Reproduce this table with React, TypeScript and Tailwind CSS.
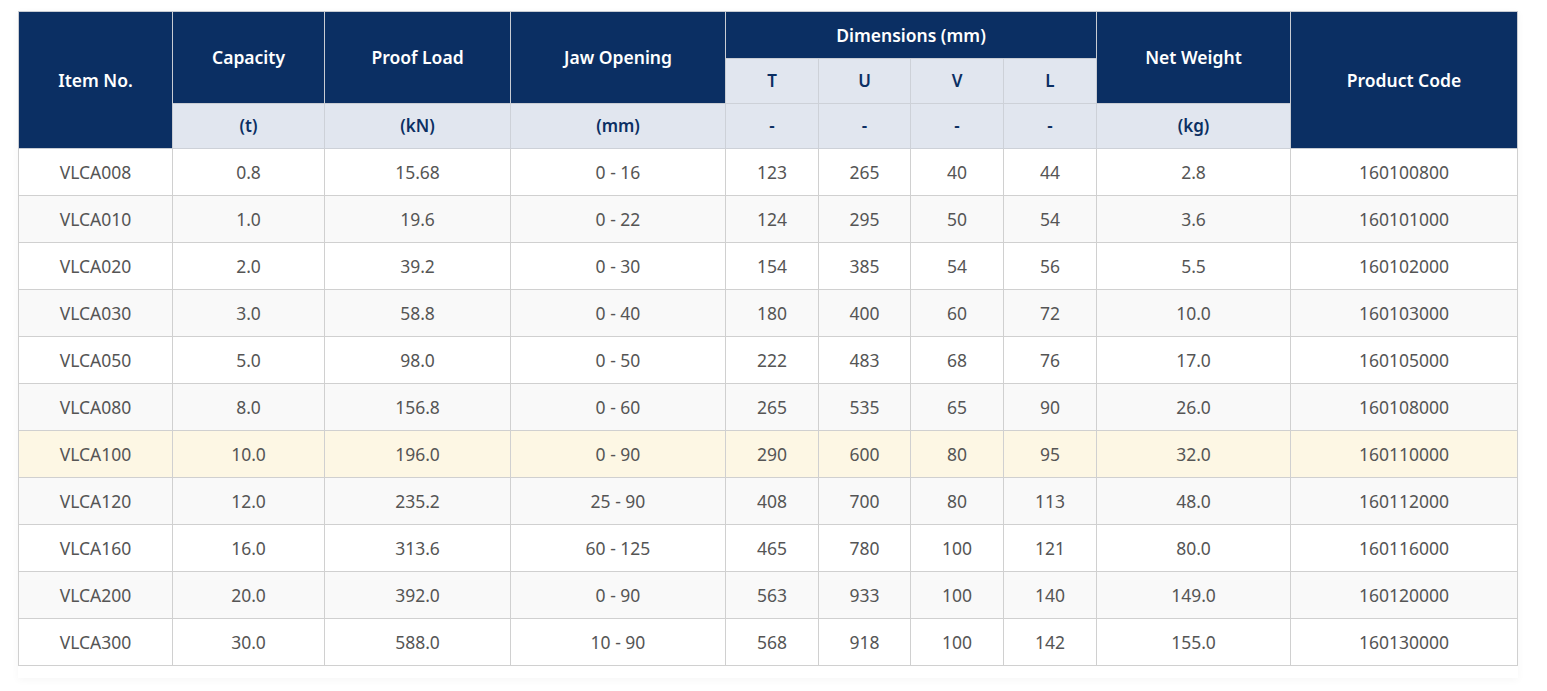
import React from 'react';

const rows = [
  ['VLCA008', '0.8', '15.68', '0 - 16', '123', '265', '40', '44', '2.8', '160100800'],
  ['VLCA010', '1.0', '19.6', '0 - 22', '124', '295', '50', '54', '3.6', '160101000'],
  ['VLCA020', '2.0', '39.2', '0 - 30', '154', '385', '54', '56', '5.5', '160102000'],
  ['VLCA030', '3.0', '58.8', '0 - 40', '180', '400', '60', '72', '10.0', '160103000'],
  ['VLCA050', '5.0', '98.0', '0 - 50', '222', '483', '68', '76', '17.0', '160105000'],
  ['VLCA080', '8.0', '156.8', '0 - 60', '265', '535', '65', '90', '26.0', '160108000'],
  ['VLCA100', '10.0', '196.0', '0 - 90', '290', '600', '80', '95', '32.0', '160110000'],
  ['VLCA120', '12.0', '235.2', '25 - 90', '408', '700', '80', '113', '48.0', '160112000'],
  ['VLCA160', '16.0', '313.6', '60 - 125', '465', '780', '100', '121', '80.0', '160116000'],
  ['VLCA200', '20.0', '392.0', '0 - 90', '563', '933', '100', '140', '149.0', '160120000'],
  ['VLCA300', '30.0', '588.0', '10 - 90', '568', '918', '100', '142', '155.0', '160130000'],
];

const widths = [154, 152, 186, 215, 93, 92, 93, 93, 194, 227];

const dark = 'bg-[#0b2f63] text-white text-[17.5px] font-semibold border border-[#c8ccd3]';
const light = 'bg-[#e1e6ef] text-[#0b2f63] text-[17px] font-semibold border border-[#cdd1d8]';

export default function App() {
  return (
    <div className="min-h-screen bg-white pt-[11px] pl-[18px]" style={{ fontFamily: '"Noto Sans", "Open Sans", sans-serif' }}>
      <div className="w-[1500px] pb-[12px] shadow-[0_2px_8px_rgba(0,0,0,0.04)]">
        <table className="w-[1500px] table-fixed border-collapse text-center">
          <colgroup>
            {widths.map((w, i) => (
              <col key={i} style={{ width: w }} />
            ))}
          </colgroup>
          <thead>
            <tr className="h-[47px]">
              <th rowSpan={3} className={dark}>Item No.</th>
              <th rowSpan={2} className={dark}>Capacity</th>
              <th rowSpan={2} className={dark}>Proof Load</th>
              <th rowSpan={2} className={dark}>Jaw Opening</th>
              <th colSpan={4} className={dark}>Dimensions (mm)</th>
              <th rowSpan={2} className={dark}>Net Weight</th>
              <th rowSpan={3} className={dark}>Product Code</th>
            </tr>
            <tr className="h-[45px]">
              <th className={light}>T</th>
              <th className={light}>U</th>
              <th className={light}>V</th>
              <th className={light}>L</th>
            </tr>
            <tr className="h-[45px]">
              <th className={light}>(t)</th>
              <th className={light}>(kN)</th>
              <th className={light}>(mm)</th>
              <th className={light}>-</th>
              <th className={light}>-</th>
              <th className={light}>-</th>
              <th className={light}>-</th>
              <th className={light}>(kg)</th>
            </tr>
          </thead>
          <tbody>
            {rows.map((r, i) => {
              const bg = r[0] === 'VLCA100' ? 'bg-[#fdf7e4]' : i % 2 === 1 ? 'bg-[#f9f9f9]' : 'bg-white';
              return (
                <tr key={r[0]} className={`h-[47px] ${bg}`}>
                  {r.map((c, j) => (
                    <td key={j} className="border border-[#d0d0d0] text-[17.5px] text-[#555555]">
                      {c}
                    </td>
                  ))}
                </tr>
              );
            })}
          </tbody>
        </table>
      </div>
    </div>
  );
}
